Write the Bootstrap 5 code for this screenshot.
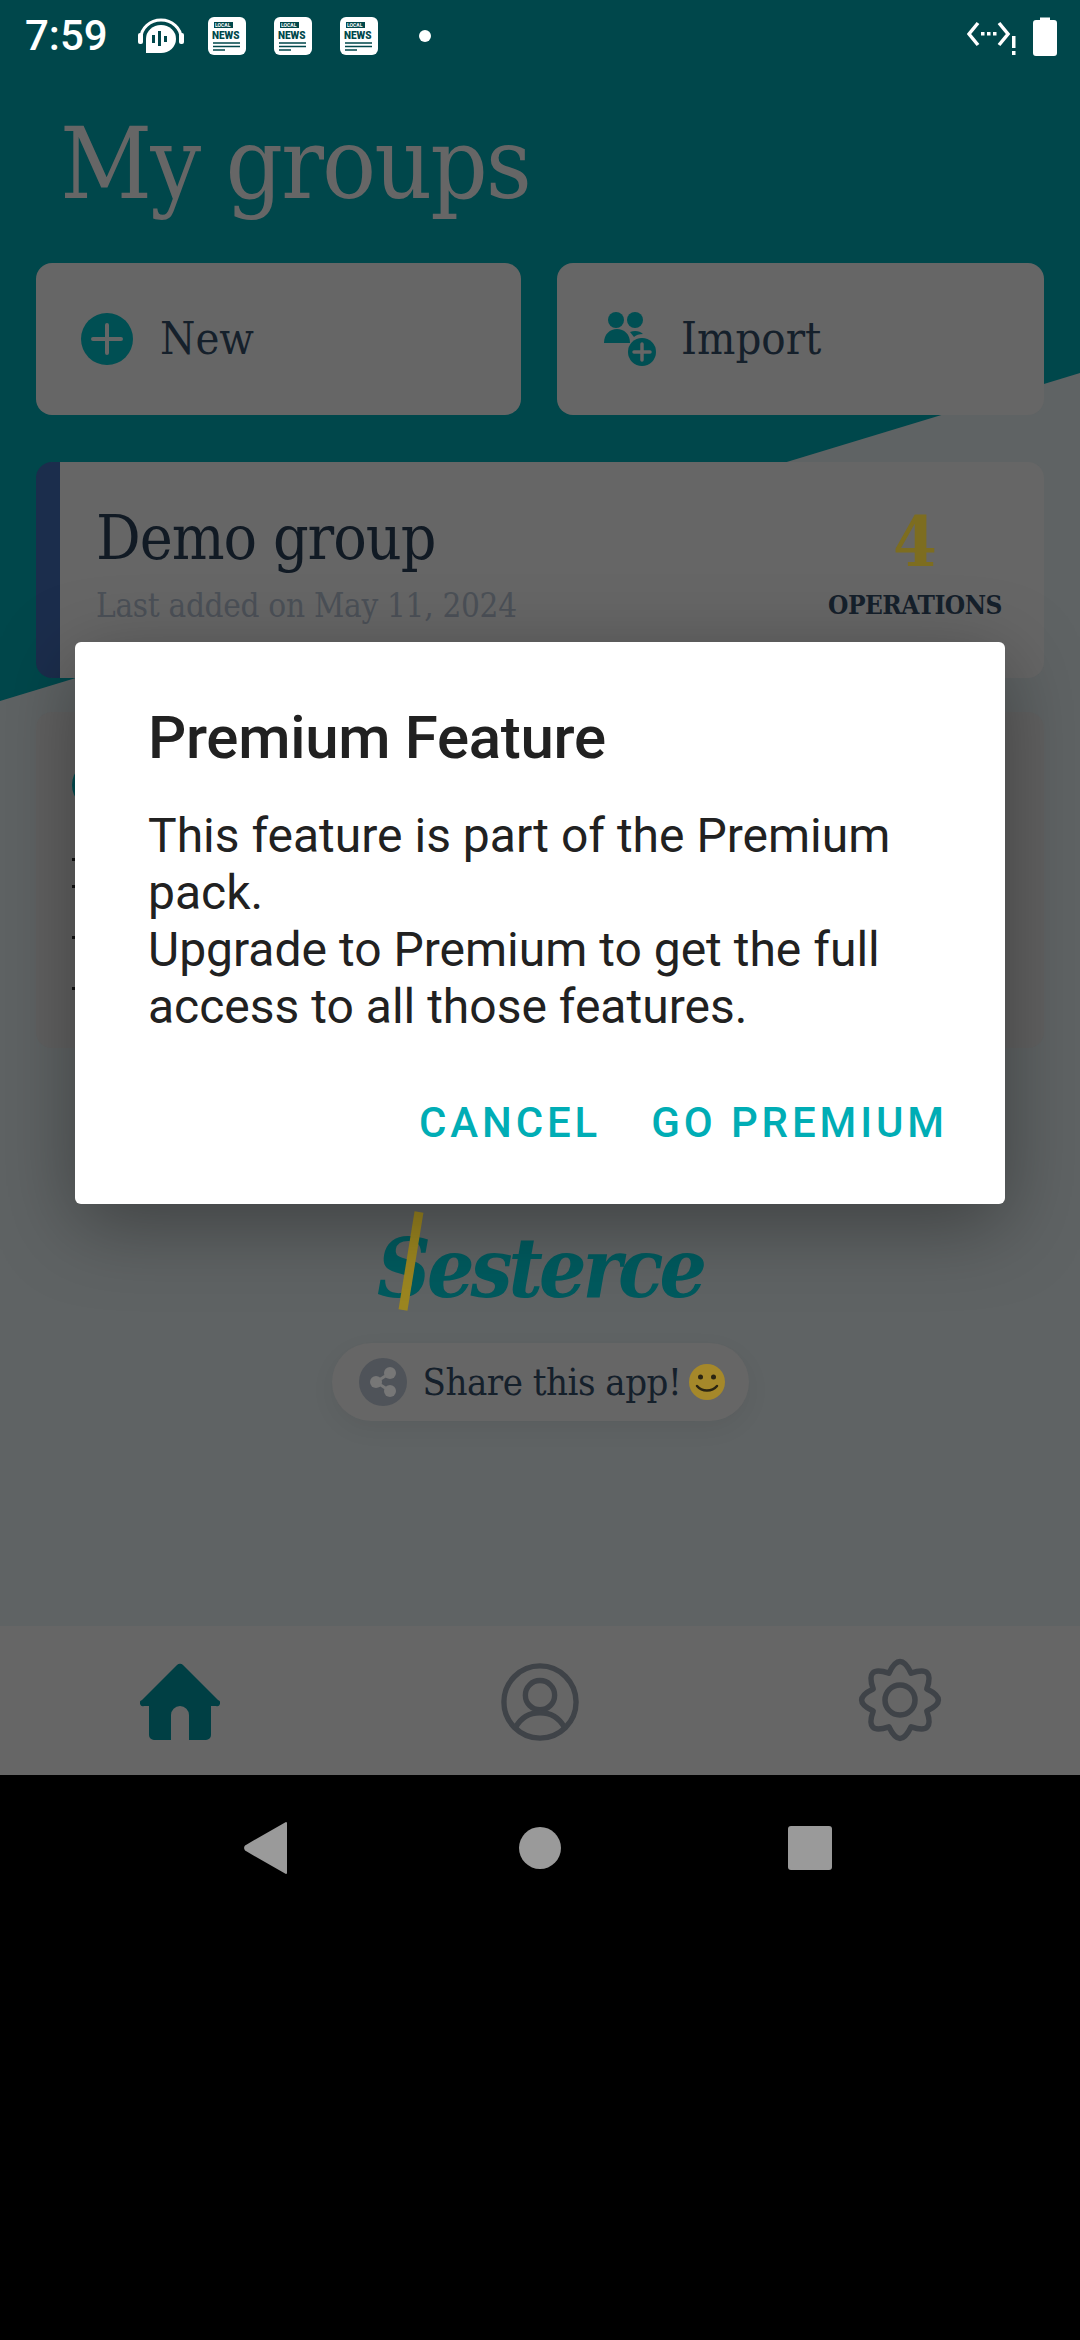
<!DOCTYPE html>
<html lang="en">
<head>
  <meta charset="UTF-8" />
  <meta name="viewport" content="width=device-width, initial-scale=1.0" />
  <title>My groups</title>
  <link href="https://cdn.jsdelivr.net/npm/bootstrap@5.3.2/dist/css/bootstrap.min.css" rel="stylesheet" />
  <style>
    body { background: #000; margin: 0; }
    .phone { width: 1080px; height: 2340px; background: #000; overflow: hidden; font-family: "DejaVu Serif Condensed", "DejaVu Serif", serif; color: #15202b; }
    /* colours below are the dimmed ones, as seen behind the dialog */
    .app-area { height: 1775px; position: relative; background: #00474b; }
    .app-area::before { content: ""; position: absolute; inset: 0; background: #5f6364; clip-path: polygon(0 701px, 100% 373px, 100% 100%, 0 100%); }

    .status-row { position: relative; height: 66px; padding: 6px 23px 0 25px; color: #fff; }
    .status-time { font: 500 42px/1 Roboto, sans-serif; width: 113px; }
    .status-news { margin-left: 28px; }
    .status-news.first-news { margin-left: 24px; }
    .status-dot { width: 12px; height: 12px; border-radius: 50%; background: #fff; margin-left: 41px; }
    .status-end { margin-left: auto; }

    .page-pad { position: relative; padding: 0 36px; height: 1560px; }
    .page-title { font-size: 100px; font-weight: 200; line-height: 120px; color: #666; margin: 0; padding: 38px 0 39px 24px; letter-spacing: -2px; }
    .action-row { gap: 36px; }
    .action-btn { flex: 1; height: 152px; background: #666; border: 0; border-radius: 16px; font-size: 45px; color: #15202b; padding: 0 0 0 45px; gap: 27px; }
    .action-btn.import-btn { padding-left: 47px; gap: 25px; }
    .group-card { height: 216px; margin-top: 47px; background: #666; border: 0; border-left: 24px solid #1b2d4c; border-radius: 16px; padding: 0 42px 0 36px; }
    .group-name { font-size: 62px; font-weight: 200; line-height: 60px; color: #111a24; margin-top: 46px; letter-spacing: -1px; }
    .group-sub { font-size: 33px; line-height: 40px; color: #4b5057; margin-top: 18px; letter-spacing: -.3px; }
    .ops-num { font-size: 70px; font-weight: 700; line-height: 70px; color: #7d6d20; margin-top: 45px; }
    .ops-label { font-size: 26px; font-weight: 700; line-height: 32px; letter-spacing: -.5px; margin-top: 12px; }
    .other-card { height: 336px; margin-top: 34px; background: #616161; border: 0; border-radius: 16px; padding: 48px 36px 0; }
    .peek-circle { width: 50px; height: 50px; border-radius: 50%; background: #004f53; }
    .peek-dot { width: 4px; height: 3px; background: #111; }

    .logo-wrap { position: relative; margin-top: 170px; height: 100px; }
    .logo-text { font-size: 83px; font-weight: 700; font-style: italic; line-height: 100px; color: #005a5e; letter-spacing: -4px; }
    .logo-slash { position: absolute; left: 360px; top: -10px; }
    .share-pill { width: 417px; height: 78px; margin: 25px auto 0; background: #666; border-radius: 39px; padding-left: 27px; gap: 16px; font-size: 38px; box-shadow: 0 8px 24px rgba(0,0,0,.06); letter-spacing: -.5px; }
    .share-emoji { margin-left: -8px; }

    .tab-bar { position: absolute; left: 0; right: 0; top: 1626px; height: 149px; background: #666; padding-top: 37px; }
    .tab-bar > div { width: 33.333%; }
    .gear-icon { margin-top: -5px; }

    .modal-holder { position: absolute; left: 75px; top: 642px; width: 930px; }
    .modal-holder .modal-content { height: 562px; background: #fff; border: 0; border-radius: 6px; box-shadow: 0 20px 80px rgba(0,0,0,.35); font-family: Roboto, sans-serif; color: #212121; padding: 64px 57px 0 73px; }
    .premium-title { font-size: 60px; font-weight: 500; line-height: 64px; margin: 0; letter-spacing: -.3px; }
    .premium-text { font-size: 48px; line-height: 57px; margin: 37px 0 0; }
    .premium-actions { gap: 50px; margin-top: 64px; }
    .premium-link { padding: 0; border: 0; font-size: 42px; font-weight: 500; line-height: 48px; letter-spacing: 3.9px; color: #00adb5; background: none; }

    .soft-keys { height: 146px; }
    .soft-back { position: absolute; left: 244px; top: 1821px; }
    .soft-home { position: absolute; left: 519px; top: 1827px; width: 42px; height: 42px; border-radius: 50%; background: #9a9a9a; }
    .soft-recent { position: absolute; left: 788px; top: 1826px; width: 44px; height: 44px; border-radius: 3px; background: #9a9a9a; }
  </style>
</head>
<body>
  <div class="phone position-relative">
    <div class="app-area">
      <div class="status-row d-flex align-items-center">
        <div class="status-time">7:59</div>
        <svg width="46" height="38" viewBox="0 0 46 38">
          <path d="M3 21a20 18 0 0 1 40 0" fill="none" stroke="#fff" stroke-width="3"/>
          <rect x="0" y="16" width="5" height="11" rx="2" fill="#fff"/>
          <rect x="41" y="16" width="5" height="11" rx="2" fill="#fff"/>
          <path d="M8 36V22a15 14 0 1 1 15 14Z" fill="#fff"/>
          <g fill="#00474b"><rect x="14" y="18" width="3" height="8"/><rect x="20" y="14" width="3" height="15"/><rect x="26" y="19" width="3" height="6"/></g>
        </svg>
        <svg class="status-news first-news" width="38" height="38" viewBox="0 0 38 38">
          <rect width="38" height="38" rx="6" fill="#fff"/><rect x="6" y="5" width="19" height="6" fill="#00474b"/>
          <text x="7" y="10" font-family="Roboto" font-size="5" font-weight="700" fill="#fff">LOCAL</text>
          <text x="4" y="22" font-family="Roboto" font-size="10" font-weight="900" fill="#00474b">NEWS</text>
          <path d="M5 26h27M5 29.500h27M5 33h12" stroke="#00474b" stroke-width="1.500"/>
        </svg>
        <svg class="status-news" width="38" height="38" viewBox="0 0 38 38">
          <rect width="38" height="38" rx="6" fill="#fff"/><rect x="6" y="5" width="19" height="6" fill="#00474b"/>
          <text x="7" y="10" font-family="Roboto" font-size="5" font-weight="700" fill="#fff">LOCAL</text>
          <text x="4" y="22" font-family="Roboto" font-size="10" font-weight="900" fill="#00474b">NEWS</text>
          <path d="M5 26h27M5 29.500h27M5 33h12" stroke="#00474b" stroke-width="1.500"/>
        </svg>
        <svg class="status-news" width="38" height="38" viewBox="0 0 38 38">
          <rect width="38" height="38" rx="6" fill="#fff"/><rect x="6" y="5" width="19" height="6" fill="#00474b"/>
          <text x="7" y="10" font-family="Roboto" font-size="5" font-weight="700" fill="#fff">LOCAL</text>
          <text x="4" y="22" font-family="Roboto" font-size="10" font-weight="900" fill="#00474b">NEWS</text>
          <path d="M5 26h27M5 29.500h27M5 33h12" stroke="#00474b" stroke-width="1.500"/>
        </svg>
        <div class="status-dot"></div>
        <svg class="status-end" width="50" height="40" viewBox="0 0 50 40">
          <path d="M11 7 2 18l9 11M32 7l9 11-9 11" fill="none" stroke="#fff" stroke-width="3.500"/>
          <rect x="14" y="16" width="3.500" height="3.500" fill="#fff"/><rect x="20" y="16" width="3.500" height="3.500" fill="#fff"/><rect x="26" y="16" width="3.500" height="3.500" fill="#fff"/>
          <rect x="45" y="20" width="3.500" height="12" fill="#fff"/><rect x="45" y="35" width="3.500" height="4" fill="#fff"/>
        </svg>
        <svg class="ms-3" width="24" height="40" viewBox="0 0 24 40">
          <path d="M7 4V1.500h10V4h4a3 3 0 0 1 3 3v30a3 3 0 0 1-3 3H3a3 3 0 0 1-3-3V7a3 3 0 0 1 3-3Z" fill="#fff"/>
        </svg>
      </div>

      <div class="page-pad">
        <h1 class="page-title">My groups</h1>
        <div class="action-row d-flex">
          <button class="action-btn d-flex align-items-center" type="button">
            <svg width="52" height="52" viewBox="0 0 52 52"><circle cx="26" cy="26" r="26" fill="#004f53"/><path d="M26 12v28M12 26h28" stroke="#666" stroke-width="4" stroke-linecap="round"/></svg>
            New
          </button>
          <button class="action-btn import-btn d-flex align-items-center" type="button">
            <svg width="52" height="54" viewBox="0 0 52 54">
              <g fill="#004f53"><circle cx="12" cy="8" r="8"/><circle cx="31" cy="8" r="8"/><path d="M0 31c0-9 6-14 13-14s13 5 13 14Z"/><path d="M26 20c5-2 10-1 13 2-4 0-7 1-9 3Z"/><circle cx="38" cy="40" r="14"/></g>
              <path d="M38 32v16M30 40h16" stroke="#666" stroke-width="3.500" stroke-linecap="round"/>
            </svg>
            Import
          </button>
        </div>

        <div class="card group-card flex-row justify-content-between">
          <div>
            <div class="group-name">Demo group</div>
            <div class="group-sub">Last added on May 11, 2024</div>
          </div>
          <div class="text-center">
            <div class="ops-num">4</div>
            <div class="ops-label">OPERATIONS</div>
          </div>
        </div>

        <div class="card other-card">
          <div class="peek-circle"></div>
          <div class="peek-dot mt-5"></div>
          <div class="peek-dot mt-4"></div>
          <div class="peek-dot mt-5"></div>
          <div class="peek-dot mt-5"></div>
        </div>

        <div class="logo-wrap text-center">
          <span class="logo-text">Sesterce</span>
          <svg class="logo-slash" width="30" height="110" viewBox="0 0 30 110"><path d="M23 4 7 102" stroke="#9c8620" stroke-width="9"/></svg>
        </div>

        <div class="share-pill d-flex align-items-center">
          <svg width="48" height="48" viewBox="0 0 48 48">
            <circle cx="24" cy="24" r="24" fill="#4f5359"/>
            <path d="M31 15 17 24l14 9" fill="none" stroke="#777" stroke-width="3"/>
            <g fill="#777"><circle cx="31" cy="15" r="6"/><circle cx="17" cy="24" r="6"/><circle cx="31" cy="33" r="6"/></g>
          </svg>
          <span>Share this app!</span>
          <svg class="share-emoji" width="36" height="36" viewBox="0 0 36 36">
            <circle cx="18" cy="18" r="18" fill="#a5882a"/>
            <circle cx="11.500" cy="13" r="2.500" fill="#2a2412"/><circle cx="24.500" cy="13" r="2.500" fill="#2a2412"/>
            <path d="M8 22c5 6 15 6 20 0" fill="none" stroke="#2a2412" stroke-width="2.500" stroke-linecap="round"/>
          </svg>
        </div>
      </div>

      <div class="tab-bar d-flex">
        <div class="d-flex justify-content-center">
          <svg width="80" height="78" viewBox="0 0 80 78"><path d="M37 2a4 4 0 0 1 6 0L78 37a3 3 0 0 1-2 6H71V72a5 5 0 0 1-5 5H49V52a9 9 0 0 0-18 0V77H14a5 5 0 0 1-5-5V43H4a3 3 0 0 1-2-6Z" fill="#003f44"/></svg>
        </div>
        <div class="d-flex justify-content-center">
          <svg width="80" height="78" viewBox="0 0 80 80" fill="none" stroke="#3f4348" stroke-width="5.500">
            <circle cx="40" cy="40" r="37"/><circle cx="40" cy="33" r="15"/><path d="M15 66c6-11 15-15 25-15s19 4 25 15"/>
          </svg>
        </div>
        <div class="d-flex justify-content-center">
          <svg class="gear-icon" width="84" height="84" viewBox="0 0 84 84" fill="none" stroke="#3f4348" stroke-width="5.500" stroke-linejoin="round">
            <path d="M30.900 15.200Q42-8 53.100 15.200 77.400 6.600 68.800 30.900 92 42 68.800 53.100 77.400 77.400 53.100 68.800 42 92 30.900 68.800 6.600 77.400 15.200 53.100-8 42 15.200 30.900 6.600 6.600 30.900 15.200Z"/>
            <circle cx="42" cy="42" r="15"/>
          </svg>
        </div>
      </div>

      <div class="modal-holder">
        <div class="modal-content">
          <h5 class="premium-title">Premium Feature</h5>
          <p class="premium-text">This feature is part of the Premium pack.<br>Upgrade to Premium to get the full access to all those features.</p>
          <div class="premium-actions d-flex justify-content-end">
            <button class="btn premium-link" type="button">CANCEL</button>
            <button class="btn premium-link" type="button">GO PREMIUM</button>
          </div>
        </div>
      </div>
    </div>

    <div class="soft-keys">
      <svg class="soft-back" width="44" height="54" viewBox="0 0 44 54"><path d="M42 2v50L2 29a3 3 0 0 1 0-4Z" fill="#9a9a9a" stroke="#9a9a9a" stroke-width="2" stroke-linejoin="round"/></svg>
      <div class="soft-home"></div>
      <div class="soft-recent"></div>
    </div>
  </div>

  <script src="https://cdn.jsdelivr.net/npm/bootstrap@5.3.2/dist/js/bootstrap.bundle.min.js"></script>
</body>
</html>
